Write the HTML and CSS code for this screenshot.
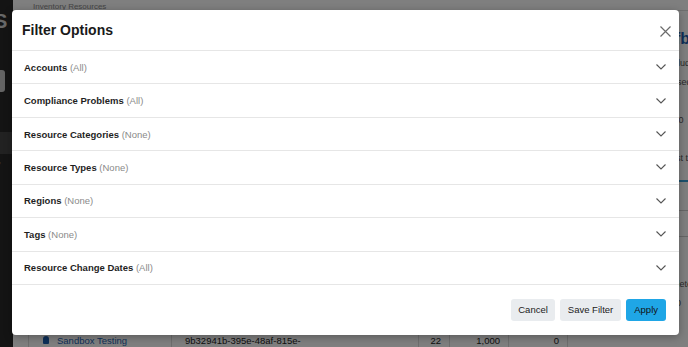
FILE: index.html
```html
<!DOCTYPE html>
<html lang="en">
  <head>
    <meta charset="UTF-8" />
    <meta name="viewport" content="width=device-width, initial-scale=1.0" />
    <title>Inventory Resources</title>
    <link rel="stylesheet" href="styles.css">
  </head>
  <body>
    <div class="page">
      <div class="sidebar">
        <div class="logo">S</div>
        <div class="side-box"></div>
        <div class="side-active"></div>
        <div class="side-caret">&#9662;</div>
      </div>
      <div class="main">
        <div class="crumb">Inventory Resources</div>
        <div class="content">
          <div class="left-col">
            <table class="res-table">
              <tr>
                <td class="c-name"><span class="acct-icon"></span><a href="#">Sandbox Testing</a></td>
                <td class="c-id">9b32941b-395e-48af-815e-<br />4c1f</td>
                <td class="c-num c-small">22</td>
                <td class="c-num">1,000</td>
                <td class="c-num">0</td>
                <td class="c-last"></td>
              </tr>
            </table>
          </div>
          <div class="right-col">
            <div class="r-title">fb</div>
            <div class="r-line">Includ</div>
            <div class="r-line">Posed</div>
            <div class="r-line">US</div>
            <div class="r-line">1/20</div>
            <div class="r-line">5/2</div>
            <div class="r-line">Last t</div>
            <div class="r-tab"></div>
            <div class="r-rule"></div>
            <div class="r-rule r-rule-2"></div>
            <div class="r-line r-low">Delete</div>
            <div class="r-line">100</div>
          </div>
        </div>
      </div>
    </div>

    <div class="backdrop"></div>

    <div class="modal">
      <div class="modal-header">
        <h2>Filter Options</h2>
        <button class="close-btn" aria-label="Close">
          <svg width="11" height="11" viewBox="0 0 11 11">
            <path d="M0.5 0.5 L10.5 10.5 M10.5 0.5 L0.5 10.5" stroke="#6b6b6b" stroke-width="1.2" fill="none" />
          </svg>
        </button>
      </div>
      <div class="filter-row"><span><b>Accounts</b> <em>(All)</em></span><svg class="chev" width="10" height="6" viewBox="0 0 10 6"><path d="M0.5 0.5 L5 5 L9.5 0.5" /></svg></div>
      <div class="filter-row"><span><b>Compliance Problems</b> <em>(All)</em></span><svg class="chev" width="10" height="6" viewBox="0 0 10 6"><path d="M0.5 0.5 L5 5 L9.5 0.5" /></svg></div>
      <div class="filter-row"><span><b>Resource Categories</b> <em>(None)</em></span><svg class="chev" width="10" height="6" viewBox="0 0 10 6"><path d="M0.5 0.5 L5 5 L9.5 0.5" /></svg></div>
      <div class="filter-row"><span><b>Resource Types</b> <em>(None)</em></span><svg class="chev" width="10" height="6" viewBox="0 0 10 6"><path d="M0.5 0.5 L5 5 L9.5 0.5" /></svg></div>
      <div class="filter-row"><span><b>Regions</b> <em>(None)</em></span><svg class="chev" width="10" height="6" viewBox="0 0 10 6"><path d="M0.5 0.5 L5 5 L9.5 0.5" /></svg></div>
      <div class="filter-row"><span><b>Tags</b> <em>(None)</em></span><svg class="chev" width="10" height="6" viewBox="0 0 10 6"><path d="M0.5 0.5 L5 5 L9.5 0.5" /></svg></div>
      <div class="filter-row"><span><b>Resource Change Dates</b> <em>(All)</em></span><svg class="chev" width="10" height="6" viewBox="0 0 10 6"><path d="M0.5 0.5 L5 5 L9.5 0.5" /></svg></div>
      <div class="modal-footer">
        <button class="btn btn-light">Cancel</button>
        <button class="btn btn-light btn-save">Save Filter</button>
        <button class="btn btn-primary">Apply</button>
      </div>
    </div>
  </body>
</html>
```

FILE: styles.css
```css
html,
body {
  margin: 0;
  height: 100%;
  overflow: hidden;
}

body {
  font-family: "Liberation Sans", Arial, sans-serif;
  background-color: #fff;
}

.page {
  display: flex;
  height: 347px;
}

.sidebar {
  width: 13px;
  background-color: #282828;
  display: flex;
  flex-direction: column;
  overflow: hidden;
}

.logo {
  color: #d0d0d0;
  font-size: 20px;
  font-weight: bold;
  margin: 10px 0 0 -6px;
  line-height: 22px;
}

.side-box {
  width: 5px;
  height: 22px;
  margin-top: 38px;
  background-color: #c8c8c8;
  border-radius: 0 3px 3px 0;
}

.side-active {
  height: 22px;
  margin-top: 40px;
  background-color: #444;
}

.side-caret {
  color: #aaa;
  font-size: 7px;
  margin: 6px 0 0 -3px;
}

.main {
  flex: 1;
  display: flex;
  flex-direction: column;
}

.crumb {
  font-size: 8px;
  color: #8a8a8a;
  padding: 2px 0 0 20px;
  height: 8px;
  border-bottom: 1px solid #ddd;
}

.content {
  flex: 1;
  display: flex;
}

.left-col {
  flex: 1;
  display: flex;
  flex-direction: column;
  justify-content: flex-end;
  align-items: flex-start;
}

.res-table {
  border-collapse: collapse;
  margin-left: 15px;
  margin-bottom: -14px;
  font-size: 9.5px;
  color: #222;
  background-color: #fff;
}

.res-table td {
  border-left: 1px solid #ddd;
  padding: 2px 8px;
  vertical-align: top;
  height: 24px;
}

.c-name {
  width: 120px;
  padding-left: 14px !important;
}

.c-name a {
  color: #1d5fb0;
  text-decoration: none;
}

.acct-icon {
  display: inline-block;
  width: 6px;
  height: 8px;
  margin-right: 8px;
  background-color: #1d5fb0;
  border-radius: 3px 3px 1px 1px;
}

.c-id {
  width: 225px;
  padding-left: 13px !important;
}

.c-num {
  text-align: right;
  width: 42px;
}

.c-small {
  width: 14px;
}

.c-last {
  width: 30px;
}

.right-col {
  width: 12px;
  overflow: hidden;
  white-space: nowrap;
  padding-top: 19px;
  font-size: 9px;
  color: #555;
}

.r-title {
  color: #1d5fb0;
  font-size: 16px;
  font-weight: bold;
  margin-left: -1px;
  height: 24px;
}

.r-line {
  margin-left: -10px;
  height: 19px;
  line-height: 19px;
}

.r-tab {
  height: 2px;
  margin-top: 12px;
  background-color: #3aa0d8;
}

.r-rule {
  height: 1px;
  margin-top: 28px;
  background-color: #ccc;
}

.r-rule-2 {
  margin-top: 25px;
}

.r-low {
  margin-top: 38px;
}

.backdrop {
  position: absolute;
  top: 0;
  left: 0;
  right: 0;
  bottom: 0;
  background-color: rgba(0, 0, 0, 0.5);
}

.modal {
  position: absolute;
  left: 12px;
  top: 10px;
  width: 667px;
  height: 325px;
  background: white;
  border-radius: 4px;
  box-shadow: 0 2px 8px rgba(0, 0, 0, 0.3);
  display: flex;
  flex-direction: column;
  color: #222;
}

.modal-header {
  height: 41px;
  box-sizing: border-box;
  border-bottom: 1px solid #e6e6e6;
  display: flex;
  align-items: center;
  justify-content: space-between;
  padding: 0 8px 0 10px;
}

.modal-header h2 {
  margin: 0;
  font-size: 14px;
  font-weight: bold;
  color: #1a1a1a;
}

.close-btn {
  border: none;
  background: none;
  padding: 0;
  margin-top: 3px;
  width: 11px;
  height: 11px;
  display: flex;
}

.filter-row {
  height: 33.43px;
  box-sizing: border-box;
  border-bottom: 1px solid #e6e6e6;
  display: flex;
  align-items: center;
  justify-content: space-between;
  padding: 0 13px 0 12px;
  font-size: 9.5px;
}

.filter-row b {
  color: #1f1f1f;
}

.filter-row em {
  font-style: normal;
  color: #8a8a8a;
}

.chev path {
  fill: none;
  stroke: #555;
  stroke-width: 1.1;
}

.modal-footer {
  flex: 1;
  display: flex;
  align-items: center;
  justify-content: flex-end;
  gap: 5px;
  padding-right: 13px;
}

.btn {
  height: 22px;
  border: none;
  border-radius: 3px;
  font-family: "Liberation Sans", Arial, sans-serif;
  font-size: 9.5px;
  color: #222;
  padding: 0 7px;
}

.btn-light {
  background-color: #e9ecef;
}

.btn-save {
  padding: 0 8px;
}

.btn-primary {
  background-color: #1fa6e6;
  color: #111;
  padding: 0 8px;
}
```
